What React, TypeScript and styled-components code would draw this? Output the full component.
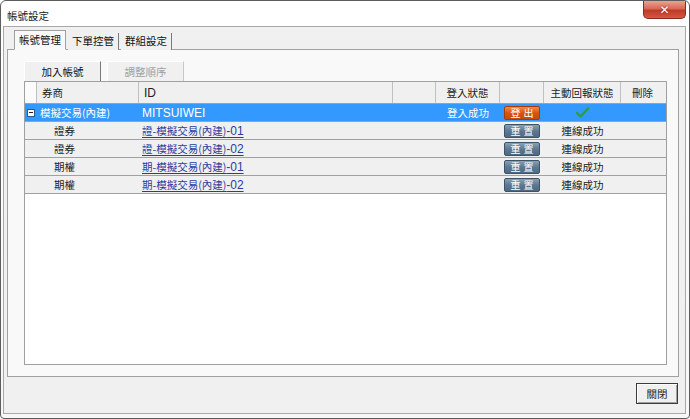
import React from 'react';
import styled, { createGlobalStyle } from 'styled-components';

const GlobalStyle = createGlobalStyle`
  html, body {
    margin: 0;
    padding: 0;
    background: #ffffff;
  }
  body {
    font-family: "Liberation Sans", "Noto Sans CJK TC", sans-serif;
    font-size: 12px;
    color: #1e1e1e;
  }
`;

const COLS = '12px 102px 254px 43px 64px 44px 77px 43px';

const Window = styled.div`
  width: 690px;
  height: 419px;
  box-sizing: border-box;
  border: 1px solid #5c5c5c;
  border-radius: 6px 6px 4px 4px;
  background: linear-gradient(#ffffff, #f7f7f7);
  display: flex;
  flex-direction: column;
  overflow: hidden;
`;

const TitleBar = styled.div`
  height: 25px;
  flex: none;
  display: flex;
  align-items: flex-start;
  justify-content: space-between;
  padding: 0 3px 0 6px;
`;

const Title = styled.div`
  margin-top: 7px;
  font-family: "Noto Sans CJK TC", sans-serif;
  font-size: 10.5px;
  color: #222;
`;

const CloseX = styled.div`
  width: 43px;
  height: 18px;
  box-sizing: border-box;
  border: 1px solid #8b2a1d;
  border-top: none;
  border-radius: 0 0 5px 5px;
  background: linear-gradient(#e9a493 0%, #d66a55 45%, #c0392b 55%, #d4583f 100%);
  display: flex;
  align-items: center;
  justify-content: center;
  color: #fff;
  font-family: "DejaVu Sans", sans-serif;
  font-weight: bold;
  font-size: 12px;
  text-shadow: 0 0 2px #7a1a10;
`;

const Body = styled.div`
  flex: 1;
  margin: 0 3px 4px 2px;
  border: 1px solid #a8a8a8;
  background: #f0f0f0;
  display: flex;
  flex-direction: column;
  padding: 3px 6px 0 3px;
`;

const TabStrip = styled.div`
  display: flex;
  align-items: flex-end;
  height: 20px;
  padding-left: 7px;
  position: relative;
  z-index: 1;
`;

const Tab = styled.div<{ $active?: boolean }>`
  font-family: "Noto Sans CJK TC", sans-serif;
  font-size: 10.5px;
  box-sizing: border-box;
  height: ${p => (p.$active ? '20px' : '17px')};
  line-height: ${p => (p.$active ? '18px' : '16px')};
  padding: 0 4px;
  background: ${p => (p.$active ? '#f9f9f9' : '#f0f0f0')};
  border: ${p => (p.$active ? '1px solid #a0a0a0' : 'none')};
  border-bottom: ${p => (p.$active ? '1px solid #f9f9f9' : 'none')};
  border-right: 1px solid ${p => (p.$active ? '#a0a0a0' : '#7a7a7a')};
  margin-right: 2px;
  color: #111;
`;

const Panel = styled.div`
  height: 328px;
  box-sizing: border-box;
  flex: none;
  margin-top: -1px;
  border: 1px solid #a0a0a0;
  background: #f9f9f9;
  padding: 11px 11px 11px 16px;
  display: flex;
  flex-direction: column;
`;

const Toolbar = styled.div`
  display: flex;
  gap: 6px;
`;

const ToolButton = styled.div<{ $disabled?: boolean }>`
  width: 77px;
  height: 20px;
  box-sizing: border-box;
  display: flex;
  align-items: center;
  justify-content: center;
  font-family: "Noto Sans CJK TC", sans-serif;
  font-size: 10.5px;
  background: #f0f0f0;
  color: ${p => (p.$disabled ? '#a0a0a0' : '#111')};
  border-top: 1px solid #ffffff;
  border-left: 1px solid #ffffff;
  border-right: 1px solid ${p => (p.$disabled ? '#c8c8c8' : '#7a7a7a')};
  border-bottom: none;
`;

const Grid = styled.div`
  flex: 1;
  width: 643px;
  box-sizing: border-box;
  border: 1px solid #a0a0a0;
  background: #ffffff;
  display: flex;
  flex-direction: column;
`;

const HeaderRow = styled.div`
  display: grid;
  grid-template-columns: ${COLS};
  height: 21px;
  background: #f0f0f0;
  border-bottom: 1px solid #a0a0a0;
`;

const HeaderCell = styled.div<{ $align?: string }>`
  border-right: 1px solid #c0c0c0;
  display: flex;
  align-items: center;
  justify-content: ${p => p.$align || 'flex-start'};
  padding: 0 5px;
  font-family: "Noto Sans CJK TC", sans-serif;
  font-size: 10.5px;
  color: #222;
  &:first-child {
    background: #fbfbfb;
  }
  &:last-child {
    border-right: none;
  }
`;

const Row = styled.div<{ $selected?: boolean }>`
  display: grid;
  grid-template-columns: ${COLS};
  height: 17px;
  background: ${p => (p.$selected ? '#3399ff' : '#f0f0f0')};
  color: ${p => (p.$selected ? '#ffffff' : '#222')};
  border-bottom: 1px solid #a0a0a0;
`;

const Cell = styled.div<{ $align?: string; $indent?: number }>`
  display: flex;
  align-items: center;
  justify-content: ${p => p.$align || 'flex-start'};
  padding: 0 ${p => p.$indent ?? 3}px;
  white-space: nowrap;
  overflow: hidden;
  font-family: "Noto Sans CJK TC", sans-serif;
  font-size: 10.5px;
`;

const LatinText = styled.span`
  font-family: "Liberation Sans", sans-serif;
  font-size: 12px;
`;

const AccountLink = styled.span`
  color: #2b3c9e;
  text-decoration: underline;
  text-underline-offset: 2px;
  font-family: "Noto Sans CJK TC", sans-serif;
  font-size: 10.5px;
  & b {
    font-family: "Liberation Sans", sans-serif;
    font-weight: normal;
    font-size: 12px;
  }
`;

const Collapse = styled.div`
  width: 8px;
  height: 8px;
  box-sizing: border-box;
  margin-left: 2px;
  border: 1px solid #355a80;
  background: #ffffff;
  display: flex;
  align-items: center;
  justify-content: center;
  &::after {
    content: '';
    width: 4px;
    height: 1px;
    background: #223;
  }
`;

const RowButton = styled.div<{ $tone: 'orange' | 'slate' }>`
  width: 36px;
  height: 14px;
  box-sizing: border-box;
  display: flex;
  align-items: center;
  justify-content: center;
  letter-spacing: 3px;
  text-indent: 3px;
  font-family: "Noto Sans CJK TC", sans-serif;
  font-size: 10px;
  color: #ffffff;
  border-radius: 2px;
  border: 1px solid ${p => (p.$tone === 'orange' ? '#a83a06' : '#3c536a')};
  background: ${p =>
    p.$tone === 'orange'
      ? 'linear-gradient(#f08a4a, #d9540e 50%, #c84a08)'
      : 'linear-gradient(#8aa0b4, #5d7890 50%, #4e6a83)'};
`;

const Footer = styled.div`
  flex: 1;
  display: flex;
  justify-content: flex-end;
  align-items: flex-start;
  padding: 6px 1px 0 0;
`;

const DialogButton = styled.div`
  width: 42px;
  height: 21px;
  box-sizing: border-box;
  display: flex;
  align-items: center;
  justify-content: center;
  font-family: "Noto Sans CJK TC", sans-serif;
  font-size: 10.5px;
  background: #f0f0f0;
  border: 1px solid #3c3c3c;
  box-shadow: inset 1px 1px 0 #ffffff, inset -1px -1px 0 #a0a0a0;
`;

const Check = () => (
  <svg width="13" height="11" viewBox="0 0 13 11">
    <path d="M1 6 L4.5 9.5 L12 1.5" fill="none" stroke="#2ea02e" strokeWidth="2.4" strokeLinecap="round" strokeLinejoin="round" />
  </svg>
);

type SubAccount = { broker: string; id: string };

const subAccounts: SubAccount[] = [
  { broker: '證券', id: '證-模擬交易(內建)-01' },
  { broker: '證券', id: '證-模擬交易(內建)-02' },
  { broker: '期權', id: '期-模擬交易(內建)-01' },
  { broker: '期權', id: '期-模擬交易(內建)-02' },
];

const splitId = (id: string) => {
  const idx = id.lastIndexOf('-');
  return [id.slice(0, idx), id.slice(idx)];
};

export default function App() {
  return (
    <>
      <GlobalStyle />
      <Window>
        <TitleBar>
          <Title>帳號設定</Title>
          <CloseX>✕</CloseX>
        </TitleBar>
        <Body>
          <TabStrip>
            <Tab $active>帳號管理</Tab>
            <Tab>下單控管</Tab>
            <Tab>群組設定</Tab>
          </TabStrip>
          <Panel>
            <Toolbar>
              <ToolButton>加入帳號</ToolButton>
              <ToolButton $disabled>調整順序</ToolButton>
            </Toolbar>
            <Grid>
              <HeaderRow>
                <HeaderCell />
                <HeaderCell>券商</HeaderCell>
                <HeaderCell><LatinText>ID</LatinText></HeaderCell>
                <HeaderCell />
                <HeaderCell $align="center">登入狀態</HeaderCell>
                <HeaderCell />
                <HeaderCell $align="center">主動回報狀態</HeaderCell>
                <HeaderCell $align="center">刪除</HeaderCell>
              </HeaderRow>
              <Row $selected>
                <Cell $indent={0}><Collapse /></Cell>
                <Cell>模擬交易(內建)</Cell>
                <Cell><LatinText>MITSUIWEI</LatinText></Cell>
                <Cell />
                <Cell $align="center">登入成功</Cell>
                <Cell $align="center" $indent={0}><RowButton $tone="orange">登出</RowButton></Cell>
                <Cell $align="center"><Check /></Cell>
                <Cell />
              </Row>
              {subAccounts.map(a => {
                const [head, tail] = splitId(a.id);
                return (
                  <Row key={a.id}>
                    <Cell />
                    <Cell $indent={17}>{a.broker}</Cell>
                    <Cell>
                      <AccountLink>{head}<b>{tail}</b></AccountLink>
                    </Cell>
                    <Cell />
                    <Cell />
                    <Cell $align="center" $indent={0}><RowButton $tone="slate">重置</RowButton></Cell>
                    <Cell $align="center">連線成功</Cell>
                    <Cell />
                  </Row>
                );
              })}
            </Grid>
          </Panel>
          <Footer>
            <DialogButton>關閉</DialogButton>
          </Footer>
        </Body>
      </Window>
    </>
  );
}
